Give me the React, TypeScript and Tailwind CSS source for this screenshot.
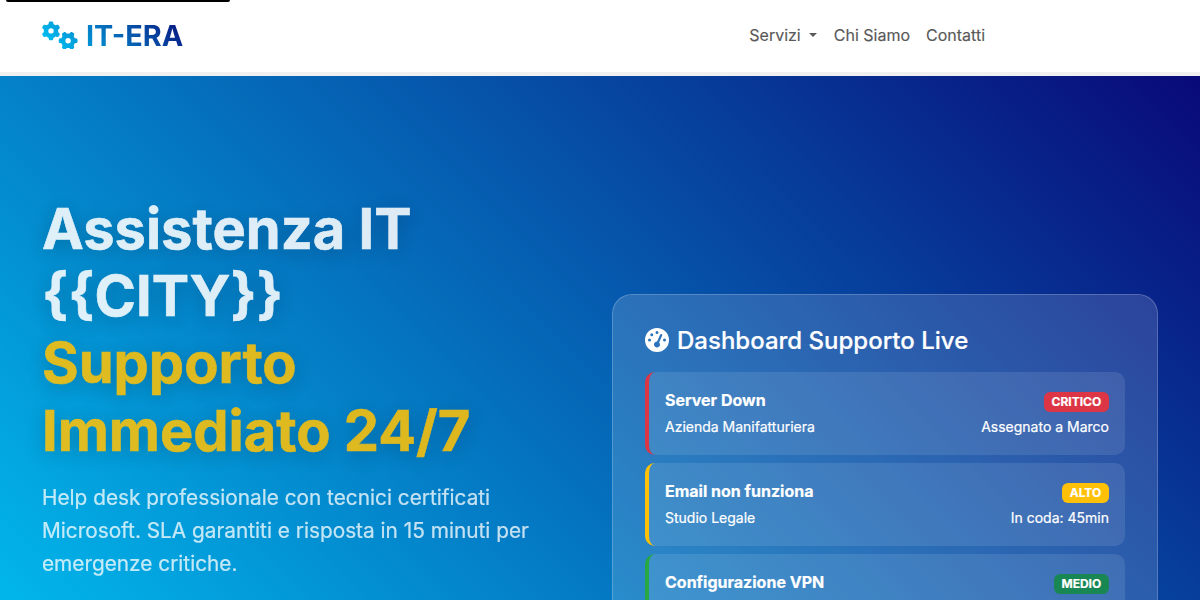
import { FaGaugeHigh, FaGears } from "react-icons/fa6";

type Ticket = {
  title: string;
  client?: string;
  badge: string;
  status?: string;
  border: string;
  badgeColor: string;
};

const tickets: Ticket[] = [
  { title: "Server Down", client: "Azienda Manifatturiera", badge: "CRITICO", status: "Assegnato a Marco", border: "border-[#dc3545]", badgeColor: "bg-[#dc3545]" },
  { title: "Email non funziona", client: "Studio Legale", badge: "ALTO", status: "In coda: 45min", border: "border-[#ffc107]", badgeColor: "bg-[#ffc107]" },
  { title: "Configurazione VPN", badge: "MEDIO", border: "border-[#28a745]", badgeColor: "bg-[#198754]" },
];

function Header() {
  return (
    <header className="flex h-[76px] flex-col bg-white">
      <div className="ml-1.5 h-0.5 w-56 shrink-0 rounded-b-[3px] bg-black" />
      <div className="flex h-[66px] items-center justify-between pr-[215px] pl-[42px]">
        <svg width="0" height="0" className="absolute">
          <linearGradient id="brand" gradientUnits="userSpaceOnUse" x1="434" y1="1072" x2="2066" y2="-560">
            <stop offset="0" stopColor="#00d4ff" />
            <stop offset="1" stopColor="#090979" />
          </linearGradient>
        </svg>
        <div className="flex items-center">
          <FaGears className="h-[28.8px] w-9" style={{ fill: "url(#brand)" }} />
          <span className="-ml-9 bg-[linear-gradient(45deg,#00d4ff,#090979)] bg-clip-text pl-11 text-[28.8px] leading-[43px] font-bold text-transparent">IT-ERA</span>
        </div>
        <nav className="flex gap-4 text-base text-[#595959] [-webkit-text-stroke:0.15px]">
          <a className="flex items-center">
            Servizi
            <span className="mr-px ml-2 border-x-[4.8px] border-t-[4.8px] border-x-transparent border-t-[#595959]" />
          </a>
          <a>Chi Siamo</a>
          <a>Contatti</a>
        </nav>
      </div>
      <div className="mt-auto h-1 bg-[#f0f0f0]" />
    </header>
  );
}

function TicketCard({ ticket }: { ticket: Ticket }) {
  return (
    <div className={`h-[83px] rounded-[10px] border-l-4 bg-white/10 p-4 ${ticket.border}`}>
      <div className="flex items-center justify-between">
        <span className="text-base leading-6 font-bold">{ticket.title}</span>
        <span className={`mt-1 rounded-md px-[7.8px] py-[4.2px] text-xs leading-3 font-bold ${ticket.badgeColor}`}>{ticket.badge}</span>
      </div>
      <div className="mt-1 flex justify-between text-sm leading-[21px]">
        <span>{ticket.client}</span>
        <span>{ticket.status}</span>
      </div>
    </div>
  );
}

export default function App() {
  return (
    <div className="h-[600px] w-[1200px] overflow-hidden font-['Inter',sans-serif]">
      <Header />
      <section className="h-[821px] bg-[linear-gradient(45deg,#00d4ff_0%,#090979_100%)]">
        <div className="grid grid-cols-2 gap-6 px-[42px] pt-[118px]">
          <div className="pt-0.5">
            <h1 className="text-[56px] leading-[67.2px] font-bold text-white opacity-87 [-webkit-text-stroke:0.6px] [text-shadow:0_4px_20px_rgba(0,0,0,0.25)]">
              Assistenza IT<br />{"{{CITY}}"}<br />
              <span className="text-[#ffc107]">Supporto<br />Immediato 24/7</span>
            </h1>
            <p className="mt-4 w-[520px] text-[20.8px] leading-[33px] text-white opacity-77 [-webkit-text-stroke:0.2px]">
              Help desk professionale con tecnici certificati Microsoft. SLA garantiti e risposta in 15 minuti per emergenze critiche.
            </p>
          </div>
          <div className="mt-[100px] h-[384px] rounded-[20px] border border-white/20 bg-white/15 p-8 pt-[31px] text-white [-webkit-text-stroke:0.2px]">
            <h2 className="mb-[17px] flex h-[29px] items-center gap-2 text-2xl leading-[29px] font-medium">
              <FaGaugeHigh className="mb-0.5 size-6" />
              Dashboard Supporto Live
            </h2>
            <div className="flex flex-col gap-2">
              {tickets.map((ticket) => <TicketCard key={ticket.title} ticket={ticket} />)}
            </div>
          </div>
        </div>
      </section>
    </div>
  );
}
